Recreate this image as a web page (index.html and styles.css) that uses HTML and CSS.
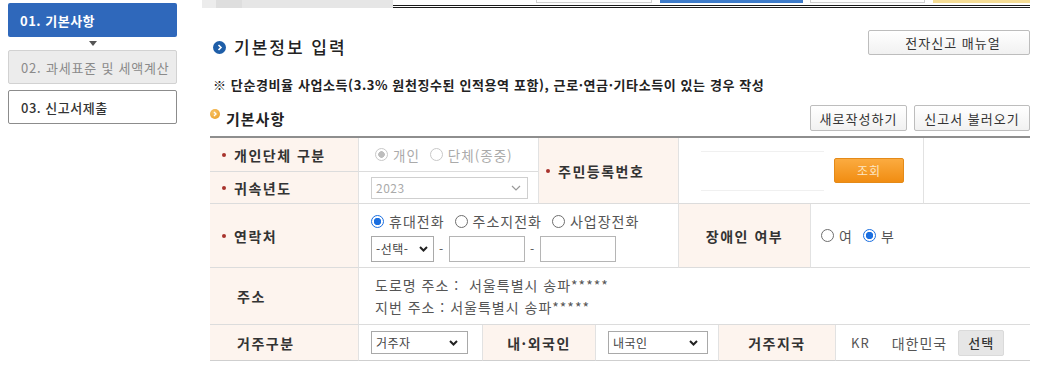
FILE: index.html
```html
<!DOCTYPE html>
<html lang="ko">
<head>
<meta charset="utf-8">
<title>기본정보 입력</title>
<link rel="stylesheet" href="styles.css">
</head>
<body>
<div class="page">
  <aside class="steps">
    <div class="step step-active">01. 기본사항</div>
    <div class="step-arrow"></div>
    <div class="step step-disabled">02. 과세표준 및 세액계산</div>
    <div class="step step-next">03. 신고서제출</div>
  </aside>
  <main class="main">
    <div class="topstrip">
      <div class="topstrip-gray"></div>
      <div class="topstrip-line">
        <span class="tabbit tb-gray1"></span>
        <span class="tabbit tb-blue"></span>
        <span class="tabbit tb-gray2"></span>
        <span class="tabbit tb-yellow"></span>
      </div>
    </div>
    <div class="content">
      <div class="head-row">
        <h1 class="title"><span class="ico-blue"><svg width="13" height="13" viewBox="0 0 13 13"><path d="M5.5 4 L8 6.5 L5.5 9" fill="none" stroke="#fff" stroke-width="1.6"/></svg></span>기본정보 입력</h1>
        <button class="btn btn-manual">전자신고 매뉴얼</button>
      </div>
      <p class="notice">※ 단순경비율 사업소득(3.3% 원천징수된 인적용역 포함), 근로·연금·기타소득이 있는 경우 작성</p>
      <div class="sub-row">
        <h2 class="subtitle"><span class="ico-orange"><svg width="10" height="10" viewBox="0 0 10 10"><path d="M4 3 L6 5 L4 7" fill="none" stroke="#fff" stroke-width="1.3"/></svg></span>기본사항</h2>
        <div class="btns">
          <button class="btn btn-new">새로작성하기</button>
          <button class="btn btn-load">신고서 불러오기</button>
        </div>
      </div>
      <div class="form-grid">
        <div class="cell lbl c-type"><span class="req"></span>개인단체 구분</div>
        <div class="cell val v-type">
          <span class="radio radio-dis-on"></span><span class="rtext dis">개인</span>
          <span class="radio radio-dis"></span><span class="rtext dis">단체(종중)</span>
        </div>
        <div class="cell lbl l-jumin"><span class="req"></span>주민등록번호</div>
        <div class="cell val v-jumin">
          <span class="jumin-input"></span>
          <button class="btn-search">조회</button>
        </div>
        <div class="cell val v-empty"></div>

        <div class="cell lbl c-year"><span class="req"></span>귀속년도</div>
        <div class="cell val v-year">
          <div class="select select-dis sel-year"><span>2023</span><svg width="10" height="6" viewBox="0 0 10 6"><path d="M1 1 L5 5 L9 1" fill="none" stroke="#999" stroke-width="1.2"/></svg></div>
        </div>

        <div class="cell lbl c-phone"><span class="req"></span>연락처</div>
        <div class="cell val v-phone">
          <div class="radio-line">
            <span class="radio radio-on"></span><span class="rtext">휴대전화</span>
            <span class="radio"></span><span class="rtext">주소지전화</span>
            <span class="radio"></span><span class="rtext">사업장전화</span>
          </div>
          <div class="phone-line">
            <div class="select sel-phone"><span>-선택-</span><svg width="9" height="6" viewBox="0 0 9 6"><path d="M1 1 L4.5 4.5 L8 1" fill="none" stroke="#222" stroke-width="2"/></svg></div>
            <span class="dash">-</span>
            <span class="tinput"></span>
            <span class="dash">-</span>
            <span class="tinput"></span>
          </div>
        </div>
        <div class="cell lbl l-dis center">장애인 여부</div>
        <div class="cell val v-dis">
          <span class="radio"></span><span class="rtext">여</span>
          <span class="radio radio-on"></span><span class="rtext">부</span>
        </div>

        <div class="cell lbl c-addr plain">주소</div>
        <div class="cell val v-addr">
          <div>도로명 주소 :&nbsp; 서울특별시 송파*****</div>
          <div>지번 주소 : 서울특별시 송파*****</div>
        </div>

        <div class="cell lbl c-res plain last">거주구분</div>
        <div class="cell val v-res last">
          <div class="select sel-res"><span>거주자</span><svg width="9" height="6" viewBox="0 0 9 6"><path d="M1 1 L4.5 4.5 L8 1" fill="none" stroke="#222" stroke-width="2"/></svg></div>
        </div>
        <div class="cell lbl l-nat center last">내·외국인</div>
        <div class="cell val v-nat last">
          <div class="select sel-nat"><span>내국인</span><svg width="9" height="6" viewBox="0 0 9 6"><path d="M1 1 L4.5 4.5 L8 1" fill="none" stroke="#222" stroke-width="2"/></svg></div>
        </div>
        <div class="cell lbl l-country center last">거주지국</div>
        <div class="cell val v-country last">
          <span class="kr">KR</span><span class="country">대한민국</span><button class="btn-pick">선택</button>
        </div>
      </div>
    </div>
  </main>
</div>
</body>
</html>
```
FILE: styles.css
```css
* { box-sizing: border-box; }
html, body { margin: 0; padding: 0; background: #fff; }
body {
  font-family: "Noto Sans CJK KR", "Noto Sans", sans-serif;
  color: #333;
  width: 1037px;
  height: 382px;
  overflow: hidden;
}
.page { display: flex; padding-left: 8px; }

/* sidebar steps */
.steps { width: 169px; padding-top: 3px; display: flex; flex-direction: column; }
.step {
  height: 34px;
  display: flex;
  align-items: center;
  padding-left: 12px;
  font-size: 13px;
  letter-spacing: 0.5px;
  border-radius: 2px;
}
.step-active { background: #2f68bb; color: #fff; font-weight: 700; }
.step-arrow {
  height: 13px;
  display: flex;
  justify-content: center;
  align-items: flex-start;
  padding-top: 4px;
}
.step-arrow::before {
  content: "";
  width: 0; height: 0;
  border-left: 4px solid transparent;
  border-right: 4px solid transparent;
  border-top: 5px solid #555;
}
.step-disabled { background: #ececec; border: 1px solid #d2d2d2; color: #8a8a8a; letter-spacing: 0.8px; }
.step-next { margin-top: 6px; background: #fff; border: 1px solid #8c8c8c; color: #333; font-weight: 500; }

/* main */
.main { margin-left: 25px; width: 828px; }
.topstrip { display: flex; height: 8px; }
.topstrip-gray {
  width: 191px;
  height: 8px;
  background: linear-gradient(90deg, #ececec 0, #ececec 14px, #dedede 14px, #dedede 40px, #e6e6e6 40px, #e6e6e6 100%);
}
.topstrip-line {
  flex: 1;
  height: 8px;
  border-bottom: 3px double #1a1a1a;
  display: flex;
  align-items: flex-start;
}
.tabbit { height: 3px; display: block; }
.tb-gray1 { margin-left: 143px; width: 116px; border: 1px solid #d0d0d0; border-top: 0; }
.tb-blue { margin-left: 8px; width: 143px; background: #3d7bc9; }
.tb-gray2 { margin-left: 7px; width: 115px; border: 1px solid #d0d0d0; border-top: 0; }
.tb-yellow { margin-left: 8px; width: 97px; background: #f5dc94; }

.content { padding-left: 8px; }
.head-row { display: flex; justify-content: space-between; align-items: flex-start; padding-top: 22px; }
.title {
  margin: 0 0 0 3px;
  padding-top: 7px;
  height: 27px;
  line-height: 20px;
  font-size: 17px;
  font-weight: 500;
  letter-spacing: 2px;
  color: #222;
  display: flex;
  align-items: center;
}
.ico-blue {
  width: 13px; height: 13px; border-radius: 50%;
  background: #1e5ea8;
  display: inline-flex;
  margin-right: 8px;
}
.btn {
  font-family: inherit;
  background: linear-gradient(#ffffff, #f1f1f1);
  border: 1px solid #bdbdbd;
  border-radius: 2px;
  color: #333;
  font-size: 13px;
  letter-spacing: 1px;
  padding: 0;
  cursor: pointer;
}
.btn-manual { width: 162px; height: 25px; padding-left: 8px; }
.notice {
  margin: 19px 0 0 3px;
  font-size: 13px;
  font-weight: 700;
  line-height: 18px;
  color: #222;
  letter-spacing: 0.6px;
}
.sub-row { display: flex; justify-content: space-between; align-items: center; margin-top: 11px; }
.subtitle {
  margin: 0;
  font-size: 15px;
  font-weight: 700;
  letter-spacing: 1px;
  color: #222;
  display: flex;
  align-items: center;
}
.ico-orange {
  width: 10px; height: 10px; border-radius: 50%;
  background: radial-gradient(circle at 40% 35%, #f8c468, #e99a1f);
  display: inline-flex;
  margin-right: 6px;
  position: relative;
  top: -4px;
}
.btns { display: flex; gap: 7px; }
.btn-new { width: 97px; height: 26px; }
.btn-load { width: 116px; height: 26px; }

/* form grid */
.form-grid {
  margin-top: 5px;
  border-top: 2px solid #8e8e8e;
  display: grid;
  grid-template-columns: 148px 124px 56px 57px 83px 40px 92px 25px 88px 107px;
  grid-template-rows: 34px 32px 64px 57px 36px;
}
.cell {
  border-bottom: 1px solid #dcdcdc;
  border-left: 1px solid #e2e2e2;
  display: flex;
  align-items: center;
  font-size: 13px;
  letter-spacing: 1px;
}
.cell.c-type, .cell.c-year, .cell.c-phone, .cell.c-addr, .cell.c-res { border-left: 0; }
.cell.last { border-bottom: 1px solid #cfcfcf; }
.lbl {
  background: #fdf4ee;
  font-weight: 700;
  font-size: 14px;
  letter-spacing: 1.5px;
  color: #333;
  padding-left: 12px;
}
.lbl.plain { padding-left: 27px; }
.lbl.center { justify-content: center; padding-left: 0; }
.req {
  width: 4px; height: 4px; border-radius: 50%;
  background: #a8322c;
  margin-right: 8px;
  flex: none;
}
.val { color: #555; padding-left: 12px; }

.c-type { grid-column: 1; grid-row: 1; }
.v-type { grid-column: 2 / 4; grid-row: 1; padding-left: 16px; }
.l-jumin { grid-column: 4 / 6; grid-row: 1 / 3; padding-left: 7px; }
.v-jumin { grid-column: 6 / 10; grid-row: 1 / 3; padding-left: 22px; }
.v-empty { grid-column: 10; grid-row: 1 / 3; }
.c-year { grid-column: 1; grid-row: 2; }
.v-year { grid-column: 2 / 4; grid-row: 2; }
.c-phone { grid-column: 1; grid-row: 3; }
.v-phone { grid-column: 2 / 6; grid-row: 3; flex-direction: column; align-items: flex-start; justify-content: center; gap: 3px; padding-top: 1px; }
.l-dis { grid-column: 6 / 8; grid-row: 3; }
.v-dis { grid-column: 8 / 11; grid-row: 3; padding-left: 10px; }
.c-addr { grid-column: 1; grid-row: 4; }
.v-addr { grid-column: 2 / 11; grid-row: 4; flex-direction: column; align-items: flex-start; justify-content: center; line-height: 22px; font-size: 14px; padding-left: 16px; }
.c-res { grid-column: 1; grid-row: 5; }
.v-res { grid-column: 2; grid-row: 5; }
.l-nat { grid-column: 3 / 5; grid-row: 5; }
.v-nat { grid-column: 5 / 7; grid-row: 5; }
.l-country { grid-column: 7 / 9; grid-row: 5; }
.v-country { grid-column: 9 / 11; grid-row: 5; padding-left: 15px; }

/* radios */
.radio {
  width: 13px; height: 13px; border-radius: 50%;
  border: 1px solid #6e6e6e;
  background: #fff;
  flex: none;
  margin-right: 5px;
  display: inline-block;
}
.radio-on {
  border: 1px solid #1b6fe0;
  background: radial-gradient(circle, #1b6fe0 0, #1b6fe0 3.4px, #fff 4px);
}
.radio-dis { border-color: #c8c8c8; }
.radio-dis-on { border-color: #c8c8c8; background: radial-gradient(circle, #bdbdbd 0, #bdbdbd 3px, #fff 3.6px); }
.rtext { margin-right: 10px; color: #555; font-size: 14px; letter-spacing: 1px; }
.rtext.dis { color: #aaa; font-size: 13.5px; }
.radio-line { display: flex; align-items: center; height: 22px; }
.phone-line { display: flex; align-items: center; height: 27px; }

/* selects / inputs */
.select {
  display: flex;
  align-items: center;
  justify-content: space-between;
  border: 1px solid #a9a9a9;
  background: #fff;
  padding: 0 6px 0 4px;
  font-size: 12px;
  color: #444;
  letter-spacing: 0.5px;
}
.select-dis { border-color: #cfcfcf; color: #aaa; }
.sel-year { width: 157px; height: 22px; }
.sel-phone { width: 63px; height: 26px; padding-right: 5px; }
.sel-res { width: 97px; height: 23px; padding-right: 9px; }
.sel-nat { width: 100px; height: 23px; padding-right: 9px; }
.dash { width: 15px; text-align: center; color: #555; font-size: 12px; }
.tinput { width: 76px; height: 26px; border: 1px solid #b5b5b5; background: #fff; display: block; }
.jumin-input { width: 123px; height: 40px; border-top: 1px solid #f0f0f0; border-bottom: 1px solid #f0f0f0; display: block; margin-right: 10px; }
.btn-search {
  font-family: inherit;
  width: 70px; height: 25px;
  border: 1px solid #e48a18;
  border-radius: 2px;
  background: linear-gradient(#fbab40, #f18d12);
  color: #fde6c4;
  font-size: 12px;
  letter-spacing: 1px;
  padding: 0;
}
.kr { color: #555; margin-right: 22px; font-size: 13px; }
.country { color: #555; margin-right: 11px; font-size: 14px; }
.btn-pick {
  font-family: inherit;
  width: 46px; height: 26px;
  background: #e6e6e6;
  border: 1px solid #dadada;
  border-radius: 2px;
  color: #333;
  font-size: 13px;
  font-weight: 500;
  letter-spacing: 1px;
  padding: 0;
}
```
